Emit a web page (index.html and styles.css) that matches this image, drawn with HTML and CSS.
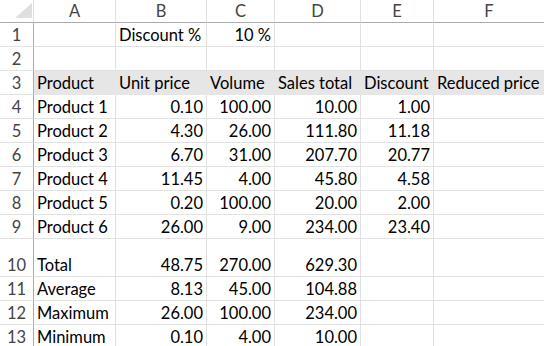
FILE: index.html
```html
<!DOCTYPE html>
<html>
<head>
<meta charset="utf-8">
<link rel="stylesheet" href="styles.css">
</head>
<body>
<div class="sheet">
  <div class="row hdr">
    <div class="corner"><svg width="33" height="22" viewBox="0 0 33 22"><polygon points="32,3 32,18 15,18" fill="#dfdfdf"/></svg></div>
    <div class="ch">A</div><div class="ch">B</div><div class="ch">C</div><div class="ch">D</div><div class="ch">E</div><div class="ch last">F</div>
  </div>
  <div class="row">
    <div class="rh">1</div><div class="c"></div><div class="c">Discount %</div><div class="c n">10 %</div><div class="c"></div><div class="c"></div><div class="c last"></div>
  </div>
  <div class="row">
    <div class="rh">2</div><div class="c"></div><div class="c"></div><div class="c"></div><div class="c"></div><div class="c"></div><div class="c last"></div>
  </div>
  <div class="row fill">
    <div class="rh">3</div><div class="c">Product</div><div class="c">Unit price</div><div class="c">Volume</div><div class="c">Sales total</div><div class="c">Discount</div><div class="c last">Reduced price</div>
  </div>
  <div class="row">
    <div class="rh">4</div><div class="c">Product 1</div><div class="c n">0.10</div><div class="c n">100.00</div><div class="c n">10.00</div><div class="c n">1.00</div><div class="c last"></div>
  </div>
  <div class="row">
    <div class="rh">5</div><div class="c">Product 2</div><div class="c n">4.30</div><div class="c n">26.00</div><div class="c n">111.80</div><div class="c n">11.18</div><div class="c last"></div>
  </div>
  <div class="row">
    <div class="rh">6</div><div class="c">Product 3</div><div class="c n">6.70</div><div class="c n">31.00</div><div class="c n">207.70</div><div class="c n">20.77</div><div class="c last"></div>
  </div>
  <div class="row">
    <div class="rh">7</div><div class="c">Product 4</div><div class="c n">11.45</div><div class="c n">4.00</div><div class="c n">45.80</div><div class="c n">4.58</div><div class="c last"></div>
  </div>
  <div class="row">
    <div class="rh">8</div><div class="c">Product 5</div><div class="c n">0.20</div><div class="c n">100.00</div><div class="c n">20.00</div><div class="c n">2.00</div><div class="c last"></div>
  </div>
  <div class="row">
    <div class="rh">9</div><div class="c">Product 6</div><div class="c n">26.00</div><div class="c n">9.00</div><div class="c n">234.00</div><div class="c n">23.40</div><div class="c last"></div>
  </div>
  <div class="row tall">
    <div class="rh">10</div><div class="c">Total</div><div class="c n">48.75</div><div class="c n">270.00</div><div class="c n">629.30</div><div class="c"></div><div class="c last"></div>
  </div>
  <div class="row">
    <div class="rh">11</div><div class="c">Average</div><div class="c n">8.13</div><div class="c n">45.00</div><div class="c n">104.88</div><div class="c"></div><div class="c last"></div>
  </div>
  <div class="row">
    <div class="rh">12</div><div class="c">Maximum</div><div class="c n">26.00</div><div class="c n">100.00</div><div class="c n">234.00</div><div class="c"></div><div class="c last"></div>
  </div>
  <div class="row">
    <div class="rh">13</div><div class="c">Minimum</div><div class="c n">0.10</div><div class="c n">4.00</div><div class="c n">10.00</div><div class="c"></div><div class="c last"></div>
  </div>
</div>
</body>
</html>
```

FILE: styles.css
```css
html, body {
  margin: 0;
  padding: 0;
  background: #ffffff;
}
body {
  width: 544px;
  height: 346px;
  overflow: hidden;
  font-family: Lato, "Open Sans", sans-serif;
  font-size: 16.5px;
  color: #000000;
}
.sheet {
  display: flex;
  flex-direction: column;
  width: 544px;
}
.row {
  display: grid;
  grid-template-columns: 34px 82px 91px 68px 86px 73px 1fr;
  height: 24px;
}
.row.hdr {
  height: 23px;
}
.row.tall {
  height: 38px;
}
.row > div {
  box-sizing: border-box;
  display: flex;
  align-items: flex-end;
  line-height: 20px;
  white-space: nowrap;
  border-right: 1px solid #e1e1e1;
  border-bottom: 1px solid #e1e1e1;
  padding: 0 3px 1px 3px;
}
.row > div.last {
  border-right: none;
}
.corner {
  padding: 0 !important;
  border-bottom-color: #ababab !important;
}
.corner svg {
  display: block;
}
.ch {
  justify-content: center;
  color: #444444;
  border-bottom-color: #ababab !important;
}
.rh {
  justify-content: center;
  color: #444444;
  border-right-color: #ababab !important;
}
.n {
  justify-content: flex-end;
}
.fill .c {
  background: #e6e6e6;
  border-color: #e6e6e6;
}
```
